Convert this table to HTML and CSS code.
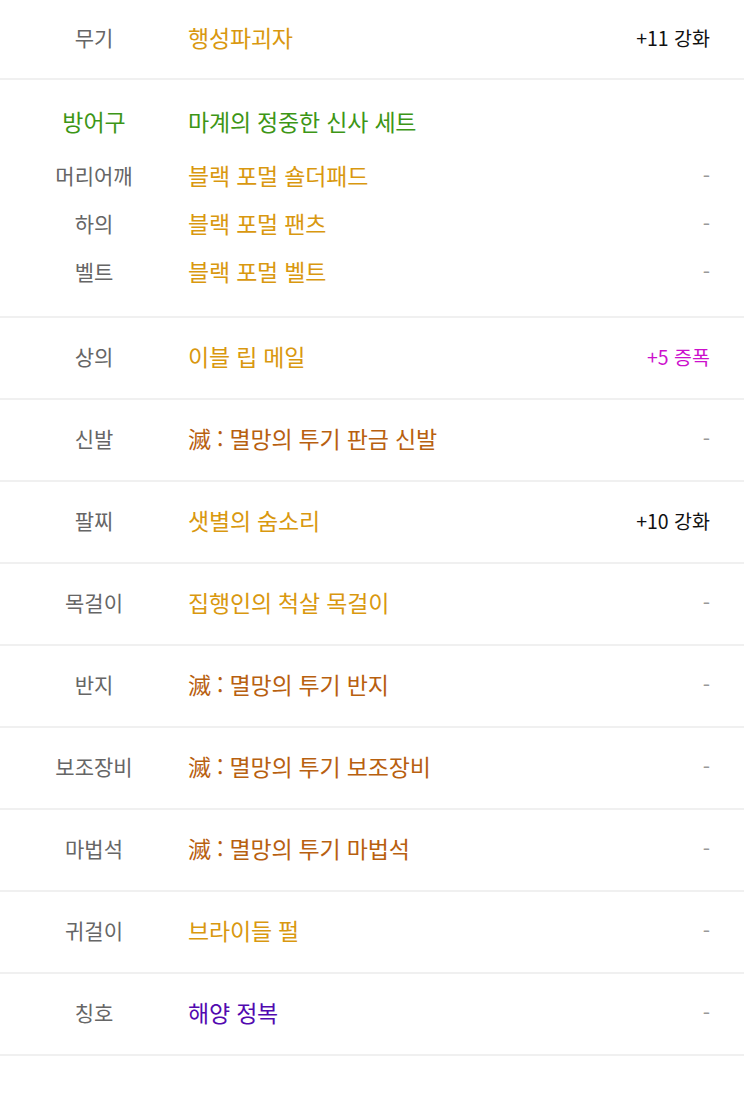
FILE: index.html
```html
<!DOCTYPE html>
<html lang="ko">
<head>
	<meta charset="UTF-8">
	<title>장비</title>
	<link rel="stylesheet" href="styles.css">
</head>
<body>
	<div id="equip">
		<div class="row first">
			<span class="slot">무기</span>
			<span class="name gold">행성파괴자</span>
			<span class="opt">+11 강화</span>
		</div>
		<div class="group">
			<div class="row head">
				<span class="slot green">방어구</span>
				<span class="name green">마계의 정중한 신사 세트</span>
				<span class="opt"></span>
			</div>
			<div class="row sub">
				<span class="slot">머리어깨</span>
				<span class="name gold">블랙 포멀 숄더패드</span>
				<span class="opt none">-</span>
			</div>
			<div class="row sub">
				<span class="slot">하의</span>
				<span class="name gold">블랙 포멀 팬츠</span>
				<span class="opt none">-</span>
			</div>
			<div class="row sub">
				<span class="slot">벨트</span>
				<span class="name gold">블랙 포멀 벨트</span>
				<span class="opt none">-</span>
			</div>
		</div>
		<div class="row">
			<span class="slot">상의</span>
			<span class="name gold">이블 립 메일</span>
			<span class="opt amp">+5 증폭</span>
		</div>
		<div class="row">
			<span class="slot">신발</span>
			<span class="name brown">滅 : 멸망의 투기 판금 신발</span>
			<span class="opt none">-</span>
		</div>
		<div class="row">
			<span class="slot">팔찌</span>
			<span class="name gold">샛별의 숨소리</span>
			<span class="opt">+10 강화</span>
		</div>
		<div class="row">
			<span class="slot">목걸이</span>
			<span class="name gold">집행인의 척살 목걸이</span>
			<span class="opt none">-</span>
		</div>
		<div class="row">
			<span class="slot">반지</span>
			<span class="name brown">滅 : 멸망의 투기 반지</span>
			<span class="opt none">-</span>
		</div>
		<div class="row">
			<span class="slot">보조장비</span>
			<span class="name brown">滅 : 멸망의 투기 보조장비</span>
			<span class="opt none">-</span>
		</div>
		<div class="row">
			<span class="slot">마법석</span>
			<span class="name brown">滅 : 멸망의 투기 마법석</span>
			<span class="opt none">-</span>
		</div>
		<div class="row">
			<span class="slot">귀걸이</span>
			<span class="name gold">브라이들 펄</span>
			<span class="opt none">-</span>
		</div>
		<div class="row">
			<span class="slot">칭호</span>
			<span class="name purple">해양 정복</span>
			<span class="opt none">-</span>
		</div>
	</div>
</body>
</html>
```

FILE: styles.css
```css
*{margin:0;padding:0;box-sizing:border-box;}
body{background:#fff;font-family:"Noto Sans CJK KR","Noto Sans",sans-serif;}
#equip{width:744px;}
.row{display:grid;grid-template-columns:188px 1fr auto;align-items:center;height:82px;padding-right:34px;padding-bottom:4px;border-bottom:2px solid #f0f0f0;}
.row.first{height:80px;}
.group{padding:22px 0 20px;border-bottom:2px solid #f0f0f0;}
.group .row{border-bottom:none;padding-bottom:2px;}
.row.head{height:40px;margin-bottom:10px;}
.row.sub{height:48px;}
.slot{text-align:center;font-size:21px;color:#666;}
.name{font-size:23px;letter-spacing:-0.2px;}
.opt{font-size:19.5px;color:#111;text-align:right;}
.opt.none{color:#999;font-size:21px;}
.opt.amp{color:#cc10cc;}
.gold{color:#d9980f;}
.green{color:#3d9616;}
.brown{color:#b8600f;}
.purple{color:#5209b0;}
.slot.green{font-size:23px;color:#3d9616;}
```
